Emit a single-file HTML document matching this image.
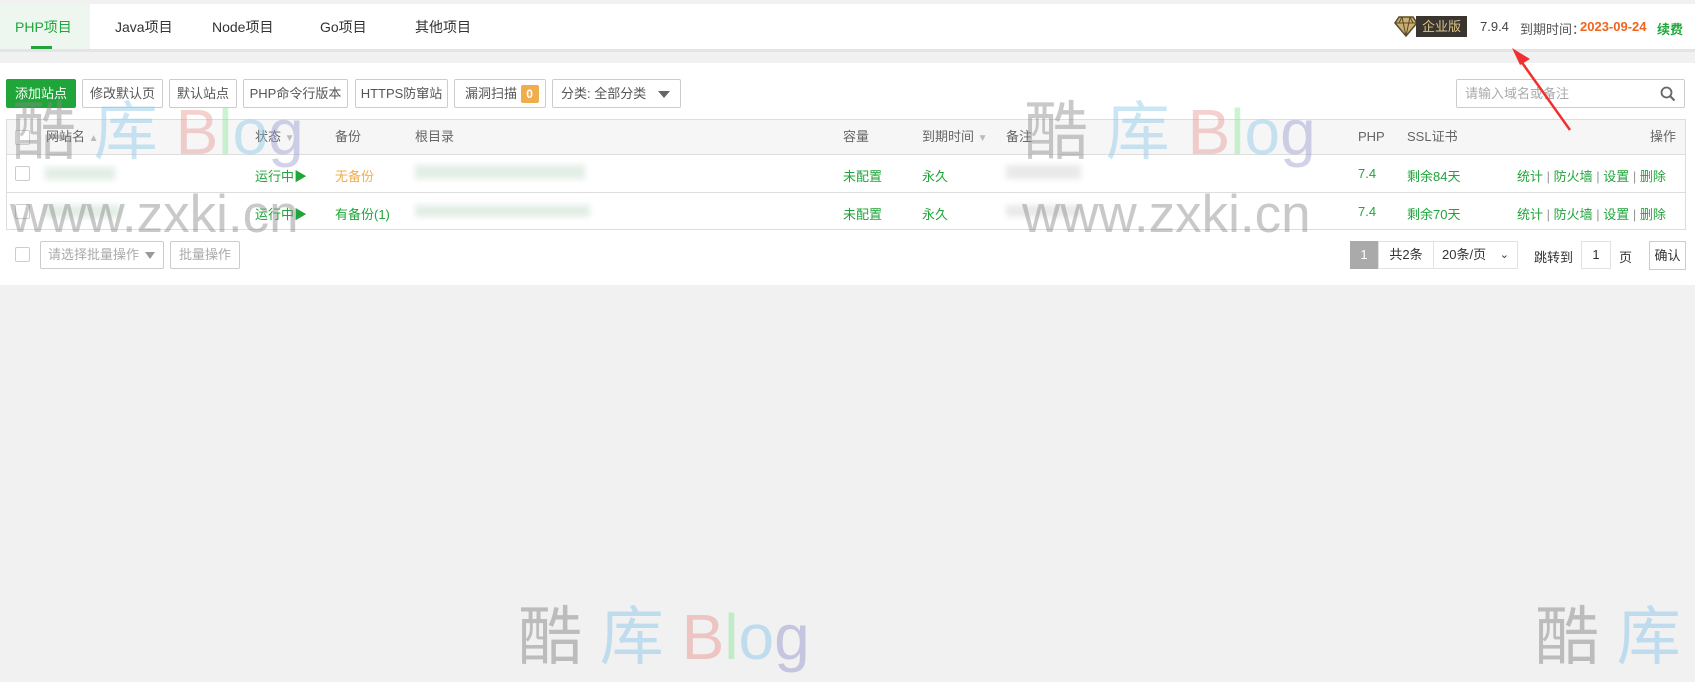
<!DOCTYPE html>
<html><head><meta charset="utf-8"><style>
*{margin:0;padding:0;box-sizing:border-box}
body{width:1695px;height:682px;background:#f1f1f1;position:relative;overflow:hidden;font-family:"Liberation Sans","Noto Sans CJK SC",sans-serif;font-size:13px;color:#333}
.a{position:absolute;white-space:nowrap}
.btn{position:absolute;top:79px;height:29px;border:1px solid #ccc;border-radius:2px;background:#fff;line-height:27px;text-align:center;color:#555;font-size:13px}
.th{position:absolute;top:119px;height:36px;line-height:36px;color:#666}
.g{color:#20a53a}
.cb{position:absolute;width:15px;height:15px;border:1px solid #ccc;border-radius:2px;background:#fff}
.blur{position:absolute;background:#dbeadf;filter:blur(3px);opacity:.8}
.wm{position:absolute;white-space:nowrap;font-size:64px;line-height:1}
</style></head><body>
<div class="a" style="left:0;top:4px;width:1695px;height:45px;background:#fff"></div>
<div class="a" style="left:0;top:4px;width:90px;height:45px;background:#eef7ef"></div>
<div class="a" style="left:31px;top:46px;width:21px;height:3px;background:#20a53a"></div>
<div class="a g" style="left:15px;top:17px;font-size:14px">PHP项目</div>
<div class="a" style="left:115px;top:17px;font-size:14px">Java项目</div>
<div class="a" style="left:212px;top:17px;font-size:14px">Node项目</div>
<div class="a" style="left:320px;top:17px;font-size:14px">Go项目</div>
<div class="a" style="left:415px;top:17px;font-size:14px">其他项目</div>
<svg class="a" style="left:1394px;top:15px" width="24" height="22" viewBox="0 0 24 22"><path d="M5 2h14l4 6-11 13L1 8z" fill="#c9b070" stroke="#5a4a2a" stroke-width="1.5"/><path d="M1 8h22M8 2l4 19 4-19M8 2l-3 6M16 2l3 6" stroke="#5a4a2a" fill="none"/></svg>
<div class="a" style="left:1416px;top:16px;width:51px;height:21px;background:#3b3530;color:#d9c48a;text-align:center;line-height:21px;font-size:13px">企业版</div>
<div class="a" style="left:1480px;top:19px;color:#444">7.9.4</div>
<div class="a" style="left:1520px;top:19px;color:#555">到期时间：</div>
<div class="a" style="left:1580px;top:19px;color:#f0641e;font-weight:bold">2023-09-24</div>
<div class="a g" style="left:1657px;top:19px;font-weight:bold">续费</div>
<div class="a" style="left:0;top:49px;width:1695px;height:3px;background:#e4e4e4"></div>
<div class="a" style="left:0;top:63px;width:1695px;height:222px;background:#fff"></div>
<div class="btn" style="left:6px;width:70px;background:#20a53a;border-color:#20a53a;color:#fff">添加站点</div>
<div class="btn" style="left:82px;width:81px">修改默认页</div>
<div class="btn" style="left:169px;width:68px">默认站点</div>
<div class="btn" style="left:243px;width:105px">PHP命令行版本</div>
<div class="btn" style="left:355px;width:93px">HTTPS防窜站</div>
<div class="btn" style="left:454px;width:92px;text-align:left;padding-left:10px">漏洞扫描 <span style="display:inline-block;background:#f0ad4e;color:#fff;border-radius:2px;width:18px;height:18px;line-height:18px;text-align:center;font-size:12px;font-weight:bold">0</span></div>
<div class="btn" style="left:552px;width:129px;text-align:left;padding-left:8px">分类: 全部分类<span style="position:absolute;right:10px;top:11px;border:6px solid transparent;border-top:7px solid #666"></span></div>
<div class="btn" style="left:1456px;width:229px;text-align:left;padding-left:8px;color:#aaa">请输入域名或备注
<svg style="position:absolute;right:8px;top:6px" width="16" height="16" viewBox="0 0 16 16"><circle cx="6.5" cy="6.5" r="5" stroke="#666" stroke-width="1.8" fill="none"/><path d="M10 10l4.5 4.5" stroke="#666" stroke-width="2"/></svg></div>
<div class="a" style="left:6px;top:119px;width:1680px;height:111px;border:1px solid #ddd"></div>
<div class="a" style="left:7px;top:120px;width:1678px;height:35px;background:#f6f6f6;border-bottom:1px solid #ddd"></div>
<div class="a" style="left:7px;top:192px;width:1678px;height:1px;background:#ddd"></div>
<div class="cb" style="left:15px;top:130px"></div>
<div class="th" style="left:46px">网站名 <span style="color:#bbb;font-size:10px">▲</span></div>
<div class="th" style="left:255px">状态 <span style="color:#bbb;font-size:10px">▼</span></div>
<div class="th" style="left:335px">备份</div>
<div class="th" style="left:415px">根目录</div>
<div class="th" style="left:843px">容量</div>
<div class="th" style="left:922px">到期时间 <span style="color:#bbb;font-size:10px">▼</span></div>
<div class="th" style="left:1006px">备注</div>
<div class="th" style="left:1358px">PHP</div>
<div class="th" style="left:1407px">SSL证书</div>
<div class="th" style="left:1650px">操作</div>
<div class="cb" style="left:15px;top:166px"></div>
<div class="cb" style="left:15px;top:204px"></div>
<div class="blur" style="left:45px;top:167px;width:70px;height:13px"></div>
<div class="blur" style="left:45px;top:205px;width:75px;height:13px"></div>
<div class="blur" style="left:415px;top:165px;width:170px;height:14px"></div>
<div class="blur" style="left:415px;top:205px;width:175px;height:12px"></div>
<div class="blur" style="left:1006px;top:165px;width:75px;height:14px;background:#e4e4e4"></div>
<div class="blur" style="left:1006px;top:205px;width:75px;height:12px;background:#e4e4e4"></div>
<div class="a g" style="left:255px;top:166px">运行中▶</div>
<div class="a" style="left:335px;top:166px;color:#f0ad4e">无备份</div>
<div class="a g" style="left:843px;top:166px">未配置</div>
<div class="a g" style="left:922px;top:166px">永久</div>
<div class="a g" style="left:1358px;top:166px">7.4</div>
<div class="a g" style="left:1407px;top:166px">剩余84天</div>
<div class="a g" style="left:1517px;top:166px">统计 <span style="color:#999">|</span> 防火墙 <span style="color:#999">|</span> 设置 <span style="color:#999">|</span> 删除</div>
<div class="a g" style="left:255px;top:204px">运行中▶</div>
<div class="a g" style="left:335px;top:204px">有备份(1)</div>
<div class="a g" style="left:843px;top:204px">未配置</div>
<div class="a g" style="left:922px;top:204px">永久</div>
<div class="a g" style="left:1358px;top:204px">7.4</div>
<div class="a g" style="left:1407px;top:204px">剩余70天</div>
<div class="a g" style="left:1517px;top:204px">统计 <span style="color:#999">|</span> 防火墙 <span style="color:#999">|</span> 设置 <span style="color:#999">|</span> 删除</div>
<div class="cb" style="left:15px;top:247px"></div>
<div class="btn" style="top:241px;height:28px;left:40px;width:124px;text-align:left;padding-left:7px;color:#aaa;line-height:26px">请选择批量操作<span style="position:absolute;right:8px;top:10px;border:5px solid transparent;border-top:7px solid #999"></span></div>
<div class="btn" style="top:241px;height:28px;left:170px;width:70px;color:#aaa;line-height:26px">批量操作</div>
<div class="a" style="left:1350px;top:241px;width:28px;height:28px;background:#aaa;color:#fff;text-align:center;line-height:28px">1</div>
<div class="a" style="left:1378px;top:241px;width:56px;height:28px;border:1px solid #e2e2e2;text-align:center;line-height:26px">共2条</div>
<div class="a" style="left:1433px;top:241px;width:85px;height:28px;border:1px solid #e2e2e2;line-height:26px;padding-left:8px">20条/页 <span style="position:absolute;right:8px;font-size:11px">⌄</span></div>
<div class="a" style="left:1534px;top:247px">跳转到</div>
<div class="a" style="left:1581px;top:241px;width:30px;height:28px;border:1px solid #e2e2e2;text-align:center;line-height:26px">1</div>
<div class="a" style="left:1619px;top:247px">页</div>
<div class="a" style="left:1649px;top:241px;width:37px;height:29px;border:1px solid #ccc;text-align:center;line-height:27px">确认</div>
<div class="wm" style="left:12px;top:100px;opacity:.45"><span style="color:#888">酷</span> <span style="color:#8cc8ea">库</span> <span style="color:#e89a95">B</span><span style="color:#8ee89a">l</span><span style="color:#8cc8ea">o</span><span style="color:#9a9ad0">g</span></div>
<div class="wm" style="left:1024px;top:100px;opacity:.45"><span style="color:#888">酷</span> <span style="color:#8cc8ea">库</span> <span style="color:#e89a95">B</span><span style="color:#8ee89a">l</span><span style="color:#8cc8ea">o</span><span style="color:#9a9ad0">g</span></div>
<div class="wm" style="left:10px;top:188px;font-size:53px;color:#888;opacity:.45">www.zxki.cn</div>
<div class="wm" style="left:1022px;top:188px;font-size:53px;color:#888;opacity:.45">www.zxki.cn</div>
<div class="wm" style="left:518px;top:605px;opacity:.5"><span style="color:#888">酷</span> <span style="color:#8cc8ea">库</span> <span style="color:#e89a95">B</span><span style="color:#8ee89a">l</span><span style="color:#8cc8ea">o</span><span style="color:#9a9ad0">g</span></div>
<div class="wm" style="left:1535px;top:605px;opacity:.5"><span style="color:#888">酷</span> <span style="color:#8cc8ea">库</span></div>
<svg class="a" style="left:1500px;top:45px" width="80" height="90" viewBox="0 0 80 90"><path d="M70 85L18 12" stroke="#f03030" stroke-width="2.5"/><path d="M12 3L30 14 20 20z" fill="#f03030"/></svg>
</body></html>
